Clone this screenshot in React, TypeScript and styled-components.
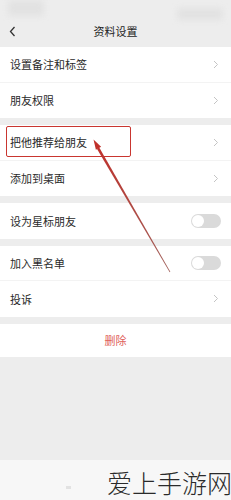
import React from 'react';
import styled, { createGlobalStyle } from 'styled-components';

const GlobalStyle = createGlobalStyle`
    html, body {
        margin: 0;
        padding: 0;
        background: #ededed;
    }
    body {
        font-family: "Noto Sans CJK SC", "Noto Sans", sans-serif;
        color: #222;
    }
`;

const Page = styled.div`
    position: relative;
    width: 231px;
    height: 500px;
    overflow: hidden;
    background: #ededed;
    display: flex;
    flex-direction: column;
`;

const StatusBar = styled.div`
    height: 15px;
    display: flex;
    justify-content: space-between;
    padding: 0 8px;
`;

const Blur = styled.div<{ w: number; h: number; top: number }>`
    width: ${p => p.w}px;
    height: ${p => p.h}px;
    margin-top: ${p => p.top}px;
    background: #dedede;
    filter: blur(3px);
    opacity: 0.7;
`;

const Header = styled.div`
    height: 32px;
    display: flex;
    align-items: center;
    justify-content: center;
    position: relative;
    font-size: 11px;
    color: #1e1e1e;
`;

const Back = styled.svg`
    position: absolute;
    left: 9px;
    top: 11px;
`;

const Group = styled.div`
    background: #fff;
    margin-bottom: 7px;
`;

const Row = styled.div<{ last?: boolean }>`
    position: relative;
    height: 35.5px;
    display: flex;
    align-items: center;
    justify-content: space-between;
    padding: 0 12px 0 10px;
    font-size: 11px;
    color: #2a2a2a;
    box-sizing: border-box;
    border-bottom: ${p => (p.last ? 'none' : '1px solid #f3f3f3')};
`;

const Chevron = styled.svg`
    display: block;
`;

const Toggle = styled.div`
    width: 30px;
    height: 14px;
    border-radius: 7px;
    background: #dadada;
    position: relative;
    margin-right: -2px;
    &::after {
        content: "";
        position: absolute;
        left: 1px;
        top: 1px;
        width: 12px;
        height: 12px;
        border-radius: 50%;
        background: #fff;
    }
`;

const Highlight = styled.div`
    position: absolute;
    left: 6px;
    top: 1px;
    width: 125px;
    height: 31px;
    border: 1.5px solid #c93630;
    border-radius: 2px;
    box-sizing: border-box;
`;

const DeleteRow = styled.div`
    height: 33.5px;
    background: #fff;
    display: flex;
    align-items: center;
    justify-content: center;
    font-size: 11px;
    color: #e0605a;
`;

const Spacer = styled.div`
    flex: 1;
`;

const BottomBar = styled.div`
    height: 40px;
    background: #f7f7f7;
    display: flex;
    align-items: center;
    justify-content: flex-end;
    position: relative;
`;

const Dot = styled.div`
    position: absolute;
    left: 66px;
    top: 26px;
    width: 5px;
    height: 3px;
    background: #e2e2e2;
`;

const Watermark = styled.div`
    font-size: 25px;
    font-weight: 300;
    color: #2a2a2a;
    margin-right: -1px;
    margin-top: 4px;
`;

const ArrowLayer = styled.svg`
    position: absolute;
    left: 0;
    top: 0;
    pointer-events: none;
`;

const Arrow = () => (
    <Chevron width="6" height="9" viewBox="0 0 6 9">
        <path d="M1 1 L4.5 4.5 L1 8" fill="none" stroke="#c4c4c4" strokeWidth="1" />
    </Chevron>
);

interface Item {
    label: string;
    kind: 'link' | 'toggle';
    mark?: boolean;
}

const groups: Item[][] = [
    [
        { label: '设置备注和标签', kind: 'link' },
        { label: '朋友权限', kind: 'link' },
    ],
    [
        { label: '把他推荐给朋友', kind: 'link', mark: true },
        { label: '添加到桌面', kind: 'link' },
    ],
    [{ label: '设为星标朋友', kind: 'toggle' }],
    [
        { label: '加入黑名单', kind: 'toggle' },
        { label: '投诉', kind: 'link' },
    ],
];

const App: React.FC = (): JSX.Element => {
    return (
        <>
            <GlobalStyle />
            <Page>
                <StatusBar>
                    <Blur w={36} h={16} top={0} />
                    <Blur w={46} h={12} top={8} />
                </StatusBar>
                <Header>
                    <Back width="7" height="11" viewBox="0 0 7 11">
                        <path d="M5.5 1 L1.5 5.5 L5.5 10" fill="none" stroke="#333" strokeWidth="1.3" />
                    </Back>
                    资料设置
                </Header>
                {groups.map((g, gi) => (
                    <Group key={gi}>
                        {g.map((item, i) => (
                            <Row key={item.label} last={i === g.length - 1}>
                                {item.mark && <Highlight />}
                                <span>{item.label}</span>
                                {item.kind === 'link' ? <Arrow /> : <Toggle />}
                            </Row>
                        ))}
                    </Group>
                ))}
                <DeleteRow>删除</DeleteRow>
                <Spacer />
                <BottomBar>
                    <Dot />
                    <Watermark>爱上手游网</Watermark>
                </BottomBar>
                <ArrowLayer width="231" height="500" viewBox="0 0 231 500">
                    <defs>
                        <linearGradient id="shaft" x1="94" y1="141" x2="170" y2="272" gradientUnits="userSpaceOnUse">
                            <stop offset="0" stopColor="#c0302a" />
                            <stop offset="1" stopColor="#a0605a" />
                        </linearGradient>
                    </defs>
                    <polygon points="99.1,147.3 96.9,148.7 169.7,272.2 170.3,271.8" fill="url(#shaft)" />
                    <polygon points="93.5,139.5 101.1,146.7 95.9,149.7" fill="#c0302a" />
                </ArrowLayer>
            </Page>
        </>
    );
};

export default App;
